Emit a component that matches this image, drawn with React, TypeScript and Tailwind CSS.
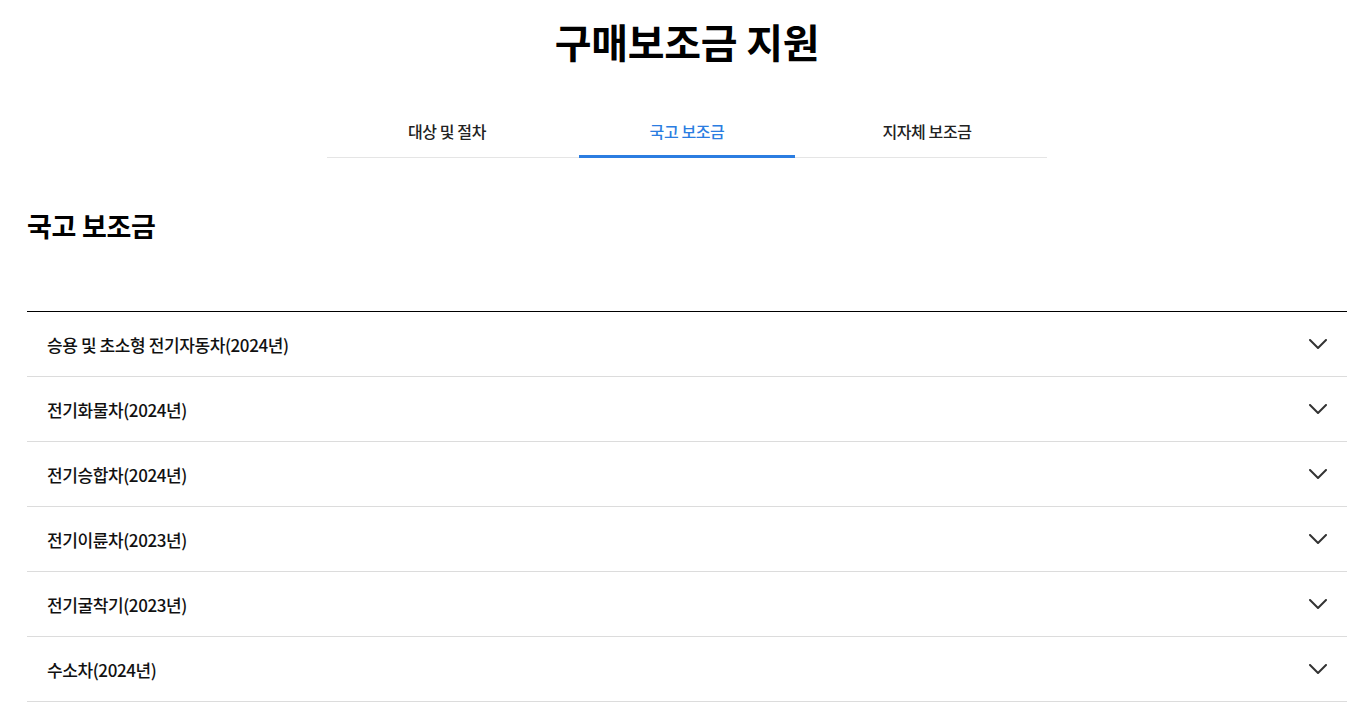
import React, { useState } from 'react';

const TABS = ['대상 및 절차', '국고 보조금', '지자체 보조금'];

const ITEMS = [
  '승용 및 초소형 전기자동차(2024년)',
  '전기화물차(2024년)',
  '전기승합차(2024년)',
  '전기이륜차(2023년)',
  '전기굴착기(2023년)',
  '수소차(2024년)',
];

const Chevron: React.FC = () => (
  <svg width="18" height="10" viewBox="0 0 18 10" fill="none">
    <path d="M1 1l8 8 8-8" stroke="#333" strokeWidth="2" strokeLinecap="round" strokeLinejoin="round" />
  </svg>
);

const App: React.FC = () => {
  const [active, setActive] = useState(1);

  return (
    <div
      className="min-h-screen w-full bg-white text-[#111]"
      style={{ fontFamily: '"Noto Sans CJK KR", "Noto Sans", sans-serif' }}
    >
      <div className="ml-[27px] w-[1320px]">
        {/* Title */}
        <h1 className="pt-[12px] text-center text-[40px] font-bold leading-[58px] tracking-[-0.3px] text-black">
          구매보조금 지원
        </h1>

        {/* Tabs */}
        <div className="mx-auto mt-[45px] flex w-[720px] border-b border-[#e5e5e5]">
          {TABS.map((t, i) => (
            <button
              key={t}
              onClick={() => setActive(i)}
              className="relative flex h-[42px] flex-1 items-start justify-center pt-[5px]"
            >
              <span
                className={`text-[16px] font-medium leading-[22px] tracking-[-0.4px] ${
                  active === i ? 'text-[#2b7de1]' : 'text-[#222]'
                }`}
              >
                {t}
              </span>
              {active === i && (
                <span className="absolute bottom-[-1px] left-[12px] right-[12px] h-[3px] bg-[#2b7de1]" />
              )}
            </button>
          ))}
        </div>

        {/* Section heading */}
        <h2 className="mt-[48px] text-[27px] font-bold leading-[40px] tracking-[-0.3px] text-black">
          국고 보조금
        </h2>

        {/* Accordion list */}
        <div className="mt-[65px] border-t border-black">
          {ITEMS.map((item) => (
            <div
              key={item}
              className="flex h-[65px] items-center justify-between border-b border-[#dcdcdc] pl-[20px] pr-[20px]"
            >
              <span className="mt-[1px] text-[17px] font-medium tracking-[-0.4px] text-[#111]">{item}</span>
              <span className="-mt-[1px]">
                <Chevron />
              </span>
            </div>
          ))}
        </div>
      </div>
    </div>
  );
};

export default App;
